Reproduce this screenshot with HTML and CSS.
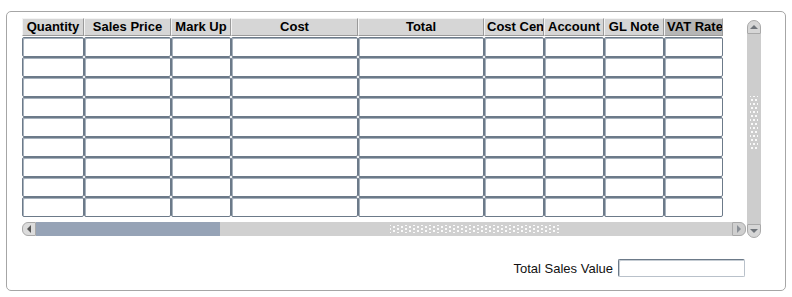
FILE: index.html
```html
<!DOCTYPE html>
<html lang="en">
<head>
    <meta charset="UTF-8">
    <title>Sales Lines</title>
    <link rel="stylesheet" href="styles.css">
</head>
<body>
    <div class="panel">
        <div class="grid-wrap">
            <div class="grid-main">
                <div class="grid-view">
                    <div class="row head">
                        <div class="hcell w-qty">Quantity</div>
                        <div class="hcell w-price">Sales Price</div>
                        <div class="hcell w-mark">Mark Up</div>
                        <div class="hcell w-cost">Cost</div>
                        <div class="hcell w-total">Total</div>
                        <div class="hcell w-small left">Cost Cen</div>
                        <div class="hcell w-small">Account</div>
                        <div class="hcell w-small">GL Note</div>
                        <div class="hcell w-vat sorted">VAT Rate</div>
                    </div>
                    <div id="rows"></div>
                </div>
                <div class="hscroll">
                    <div class="sbtn left">
                        <svg width="6" height="8" viewBox="0 0 6 8"><path d="M5 0 L1 4 L5 8 Z" fill="#555"/></svg>
                    </div>
                    <div class="hthumb"></div>
                    <div class="htrack"><span class="grip-h"></span></div>
                    <div class="sbtn right">
                        <svg width="6" height="8" viewBox="0 0 6 8"><path d="M1 0 L5 4 L1 8 Z" fill="#8a8f96"/></svg>
                    </div>
                </div>
            </div>
            <div class="vscroll">
                <div class="sbtn up">
                    <svg width="8" height="6" viewBox="0 0 8 6"><path d="M0 5 L4 1 L8 5 Z" fill="#6f747a"/></svg>
                </div>
                <div class="vtrack"><span class="grip-v"></span></div>
                <div class="sbtn down">
                    <svg width="8" height="6" viewBox="0 0 8 6"><path d="M0 1 L4 5 L8 1 Z" fill="#6f747a"/></svg>
                </div>
            </div>
        </div>
        <div class="footer">
            <label for="totalSales">Total Sales Value</label>
            <input type="text" id="totalSales">
        </div>
    </div>
    <script>
        // 9 empty editable lines
        const widths = ["w-qty", "w-price", "w-mark", "w-cost", "w-total", "w-small", "w-small", "w-small", "w-vat"];
        const rows = document.getElementById("rows");
        for (let i = 0; i < 9; i++) {
            const row = document.createElement("div");
            row.className = "row";
            widths.forEach(function (w) {
                const cell = document.createElement("div");
                cell.className = "cell " + w;
                row.appendChild(cell);
            });
            rows.appendChild(row);
        }
    </script>
</body>
</html>
```

FILE: styles.css
```css
body {
    margin: 0;
    background: #fff;
    font-family: "Liberation Sans", Arial, sans-serif;
}
.panel {
    box-sizing: border-box;
    width: 780px;
    height: 280px;
    margin: 11px 0 0 6px;
    padding: 6px 0 0 15px;
    border: 1px solid #a6a6a6;
    border-radius: 5px;
}
.grid-wrap {
    display: flex;
    align-items: flex-start;
    gap: 1px;
}
.grid-main {
    width: 724px;
}
.grid-view {
    width: 701px;
    overflow: hidden;
}
.row {
    display: flex;
    height: 20px;
}
.row.head {
    height: 18px;
    margin-bottom: 1px;
}
.hcell {
    box-sizing: border-box;
    flex: none;
    height: 18px;
    line-height: 16px;
    padding: 0 2px;
    border: 1px solid;
    border-color: #f4f4f4 #9a9a9a #9a9a9a #f4f4f4;
    background: #d6d6d6;
    font-size: 13px;
    font-weight: bold;
    text-align: center;
    white-space: nowrap;
    overflow: hidden;
}
.hcell.left {
    text-align: left;
}
.hcell.sorted {
    background: #b6b6b6;
    text-align: left;
}
.cell {
    box-sizing: border-box;
    flex: none;
    height: 20px;
    border: 1px solid #6c7a89;
    border-radius: 2px;
    background: #fff;
    box-shadow: inset 1px 1px 0 #a7b2bd;
}
.w-qty { width: 62px; }
.w-price { width: 87px; }
.w-mark { width: 60px; }
.w-cost { width: 127px; }
.w-total { width: 126px; }
.w-small { width: 60px; }
.w-vat { width: 59px; }

.hscroll {
    display: flex;
    height: 14px;
    margin-top: 5px;
}
.sbtn {
    box-sizing: border-box;
    width: 14px;
    height: 14px;
    display: flex;
    align-items: center;
    justify-content: center;
    background: #d2d2d2;
    border: 1px solid #a9a9a9;
    flex: none;
}
.sbtn.left {
    border-radius: 6px 0 0 6px;
    background: #dcdcdc;
}
.sbtn.right {
    border-radius: 0 6px 6px 0;
    background: #cfcfcf;
}
.sbtn.up {
    border-radius: 7px 7px 0 0;
    background: #d6d6d6;
}
.sbtn.down {
    border-radius: 0 0 7px 7px;
    background: #d6d6d6;
}
.hthumb {
    width: 184px;
    background: #96a3b6;
}
.htrack {
    flex: 1;
    background: #d0d0d0;
    position: relative;
}
.grip-h {
    position: absolute;
    left: 170px;
    top: 3px;
    width: 170px;
    height: 8px;
    background-image:
        radial-gradient(circle, #fafafa 0.8px, transparent 1.1px),
        radial-gradient(circle, #fafafa 0.8px, transparent 1.1px);
    background-size: 8px 4px;
    background-position: 0 0, 4px 2px;
}
.vscroll {
    display: flex;
    flex-direction: column;
    width: 14px;
    height: 218px;
    margin-top: 2px;
}
.vtrack {
    flex: 1;
    background: #cdcdcd;
    position: relative;
}
.grip-v {
    position: absolute;
    left: 3px;
    top: 62px;
    width: 8px;
    height: 54px;
    background-image:
        radial-gradient(circle, #fafafa 0.8px, transparent 1.1px),
        radial-gradient(circle, #fafafa 0.8px, transparent 1.1px);
    background-size: 4px 8px;
    background-position: 0 0, 2px 4px;
}
.footer {
    display: flex;
    justify-content: flex-end;
    align-items: center;
    gap: 5px;
    width: 723px;
    margin-top: 21px;
}
.footer label {
    font-size: 13px;
    color: #111;
}
.footer input {
    box-sizing: border-box;
    width: 127px;
    height: 18px;
    margin: 0;
    border: 1px solid;
    border-color: #6c7a89 #b9c1ca #b9c1ca #6c7a89;
    border-radius: 2px;
    box-shadow: inset 1px 1px 0 #c5ccd3;
}
```
